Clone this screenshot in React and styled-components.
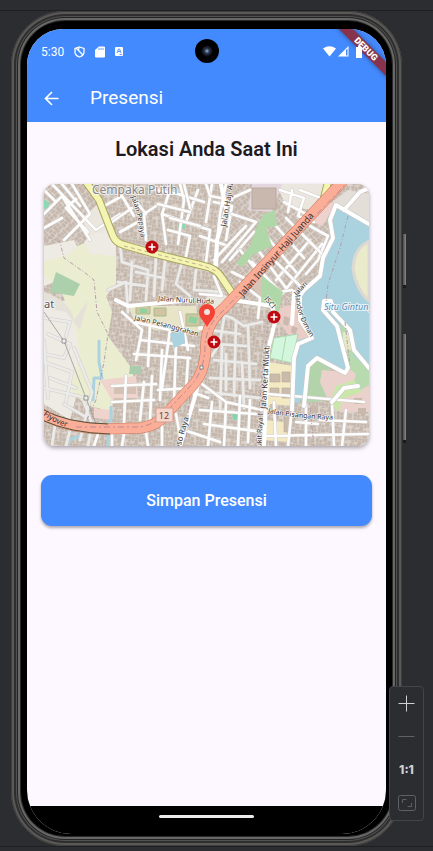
import React from "react";
import styled, { createGlobalStyle } from "styled-components";

const GlobalStyle = createGlobalStyle`
  *, *::before, *::after { box-sizing: border-box; }
  body { margin: 0; background: #2b2d30; font-family: Roboto, "Noto Sans", sans-serif; }
  button { font: inherit; border: 0; padding: 0; background: none; color: inherit; cursor: pointer; }
`;

const Stage = styled.main`
  position: relative;
  display: flex;
  flex-direction: column;
  min-height: 100vh;
  background: #2b2d30;
`;

const Strip = styled.div`
  height: ${(p) => p.$height}px;
  border-${(p) => p.$edge}: 1px solid #1e1f22;
`;

const Phone = styled.div`
  position: relative;
  display: flex;
  flex: 1;
  margin: 0 31px 0 11px;
  padding: 18px 16px 12px;
  border-radius: 54px;
  background: #000;
  box-shadow:
    inset 0 0 0 1px #3e3e3c,
    inset 0 0 0 3px #5a5957,
    inset 0 0 0 5px #2e2e2e,
    inset 0 0 0 6px #505050,
    inset 0 0 0 7px #242424,
    inset 0 0 0 9px #676765,
    inset 0 0 0 10px #2a2a2a;
`;

const SideKey = styled.span`
  position: absolute;
  right: -4px;
  top: ${(p) => p.$top}px;
  width: 3px;
  height: ${(p) => p.$length}px;
  border: solid #1b1b1b;
  border-width: 0 0 3px;
  background: linear-gradient(90deg, #4a4a48, #8b8983);
`;

const Screen = styled.div`
  position: relative;
  display: flex;
  flex: 1;
  flex-direction: column;
  overflow: hidden;
  border-radius: 36px 36px 44px 44px;
  background: #fdf7ff;
`;

const Header = styled.header`
  background: #448aff;
  color: #fff;
`;

const StatusBar = styled.div`
  display: flex;
  align-items: center;
  justify-content: space-between;
  height: 45px;
  padding: 0 22px 0 14px;
  font-size: 12px;
`;

const StatusGroup = styled.div`
  display: flex;
  align-items: center;
  gap: ${(p) => p.$gap}px;
  position: relative;
  z-index: 2;
`;

const Clock = styled.time`
  line-height: 16px;
`;

const Camera = styled.div`
  position: absolute;
  top: 10px;
  left: 50%;
  width: 24px;
  height: 24px;
  margin-left: -12px;
  border-radius: 50%;
  background: radial-gradient(circle, #7791ae 0 1px, #35425a 2px, #191e2c 4px, #000 6px);
`;

const DebugRibbon = styled.div`
  position: absolute;
  z-index: ${(p) => (p.$label ? 3 : 1)};
  top: 15px;
  right: -30px;
  width: 100px;
  height: 10px;
  background: ${(p) => (p.$label ? "none" : "#87334d")};
  box-shadow: ${(p) => (p.$label ? "none" : "0 0 5px rgba(0, 0, 0, 0.4)")};
  color: #fff;
  font-size: 9px;
  font-weight: 900;
  line-height: 10px;
  text-align: center;
  transform: rotate(45deg);
`;

const AppBar = styled.div`
  display: flex;
  align-items: center;
  gap: 28px;
  height: 48px;
  padding: 0 14px;
`;

const BackButton = styled.button`
  display: flex;
  width: 21px;
  height: 21px;
`;

const Title = styled.h1`
  margin: 0;
  font-size: 19px;
  font-weight: 400;
  line-height: 24px;
`;

const Content = styled.section`
  display: flex;
  flex: 1;
  flex-direction: column;
  padding: 14px;
`;

const Heading = styled.h2`
  margin: 0 0 21px;
  color: #1d1b20;
  font-size: 20px;
  font-weight: 600;
  line-height: 27px;
  text-align: center;
`;

const MapCard = styled.div`
  margin: 0 3px 29px;
  overflow: hidden;
  border-radius: 11px;
  box-shadow: 0 2px 4px rgba(0, 0, 0, 0.35);

  svg { display: block; width: 100%; height: auto; }
`;

const SaveButton = styled.button`
  height: 51px;
  border-radius: 11px;
  background: #448aff;
  box-shadow: 0 2px 3px rgba(0, 0, 0, 0.32);
  color: #fff;
  font-size: 16px;
  font-weight: 500;
`;

const NavBar = styled.div`
  display: flex;
  justify-content: center;
  height: 28px;
  padding-top: 9px;
  background: #000;
`;

const Handle = styled.span`
  width: 95px;
  height: 3px;
  border-radius: 2px;
  background: #ececec;
`;

const ZoomPanel = styled.div`
  position: absolute;
  right: 9px;
  bottom: 30px;
  display: flex;
  flex-direction: column;
  width: 35px;
  padding-bottom: 1px;
  border: 1px solid #43454a;
  border-radius: 4px;
  background: #2b2d30;
`;

const ZoomButton = styled.button`
  display: flex;
  align-items: center;
  justify-content: center;
  height: 33px;
  color: ${(p) => (p.$dim ? "#5f6164" : "#ced0d6")};
  font-family: Inter, sans-serif;
  font-size: 12px;
  font-weight: 800;
`;

const wide = { fill: "none", strokeLinecap: "round", strokeLinejoin: "round" };

const lanes = [
  "M44 214L62 196L90 240M56 202L44 190M52 184L96 230L120 214M62 184L80 206M72 184L90 214L64 240M44 228L62 218M76 199L66 208L88 232",
  "M106 205L122 196L134 216M112 222L132 208M120 232L138 222L146 236M134 199L146 214M146 240L144 214L156 206M170 190L162 214L166 244M162 214L186 222L198 190",
  "M156 190L178 194L204 202M180 184L184 200L178 244M184 222L210 230L206 262M168 230L190 236L186 256M214 202L232 206L226 240M200 236L228 246",
  "M184 184L190 208M212 184L206 222M170 218L200 226M158 204L190 212",
  "M120 244L122 262L148 270L146 300M132 262L130 300M156 256L154 296M166 252L162 290M182 262L176 284L190 296M118 282L146 286M108 290L126 282L128 312M136 272L164 278M196 270L194 290L222 292",
  "M206 184L210 196L232 200M226 184L220 214L214 270M232 214L256 222L222 262M246 226L214 260M254 232L230 260M232 198L250 190L270 190",
  "M280 190L304 198L298 216L314 222M284 202L306 214M292 190L288 212M300 190L326 200M310 226L328 236L318 260L306 274M276 226L304 258M268 238L296 272M258 250L286 288M298 230L270 262M310 240L276 280M322 244L282 294",
  "M252 262L280 292L292 290M240 282L260 298L258 318M232 272L248 280M214 276L222 296L200 294M240 250L258 272M286 218L322 254M272 258L300 286",
  "M214 312L232 318L244 326L262 322M224 318L220 342L212 356M236 322L234 396M216 344L246 346M214 360L256 364M210 378L260 380M206 392L260 398M222 346L220 412M248 326L250 388M210 330L240 334M226 354L226 390M242 362L244 408",
  "M202 384L226 402L262 410M200 410L256 414M204 424L262 432M212 402L208 446M226 404L224 446M240 396L238 446M250 400L248 442M184 430L220 442",
  "M268 394L364 402M274 402L276 446M292 408L288 446M306 404L306 446M320 420L366 422M332 402L334 446M262 436L368 434M346 410L342 446M296 422L318 424",
  "M44 318L70 322L66 336M48 334L70 344L64 358L44 354M44 362L72 372L66 402M50 378L76 388M44 388L86 398M74 348L92 392L80 440M44 340L48 398M56 418L52 446M70 430L66 446M84 402L92 424L88 446M64 404L84 416",
  "M122 312L142 330L136 360M134 322L170 330L162 388M150 324L148 366M140 340L194 346M134 354L190 358M144 382L140 420M126 376L124 424M112 386L156 384M112 402L154 400M152 376L150 420M162 350L160 400M176 344L174 402M188 358L186 392M158 390L190 388M180 312L188 350",
  "M98 434L94 446M112 434L112 446M124 434L122 446M146 432L148 446M162 426L162 446M176 414L180 436M192 392L208 398",
];

const greyLanes = [4, 8, 11];

const hospitals = [[152, 247], [274, 317], [214, 342]];

const roadLabels = [
  { x: 92, y: 194, size: 12, fill: "#88888d", text: "Cempaka Putih" },
  { x: 44, y: 308, size: 11, fill: "#55555c", text: "at" },
  { x: 324, y: 310, size: 9, fill: "#5d91bb", slant: "italic", text: "Situ Gintung" },
];

const curvedLabels = [
  { id: "papaya", d: "M131 197Q139 216 141 240", size: 7, text: "Jalan Pepaya" },
  { id: "haji", d: "M226 227L234 180", size: 8, text: "Jalan Haji Ab" },
  { id: "juanda", d: "M243 297L322 207", size: 9, text: "Jalan Insinyur Haji Juanda" },
  { id: "huda", d: "M158 301L218 304", size: 7, text: "Jalan Nurul Huda" },
  { id: "pesan", d: "M134 320Q172 328 202 338", size: 7, text: "Jalan Pesanggrahan" },
  { id: "mukti", d: "M266 409L270 338", size: 8, text: "Jalan Kerta Mukti" },
  { id: "bukit", d: "M261 452L263 410", size: 7, text: "Bukit Raya I" },
  { id: "pisangan", d: "M268 413Q300 419 340 420", size: 7, text: "Jalan Pisangan Raya" },
  { id: "raya", d: "M180 450Q184 434 190 414", size: 8, text: "oso Raya" },
  { id: "flyover", d: "M43 415Q56 425 76 430", size: 8, text: "Flyover" },
  { id: "isci", d: "M264 299L276 313", size: 7, text: "ISCI" },
  { id: "mandor", d: "M295 291Q296 318 314 342", size: 7, text: "Mandor Diman" },
  { id: "jalan", d: "M297 296L315 276", size: 7, text: "Jalan" },
];

function StreetMap() {
  return (
    <svg viewBox="44 184 325 262" role="img" aria-label="Peta lokasi">
      <defs>
        <pattern id="homes" width="17" height="15" patternUnits="userSpaceOnUse" patternTransform="rotate(8)">
          <rect width="17" height="15" fill="#dcd4cc" />
          <path d="M0 0h3v3h-3zM4 1h2v3h-2zM7 0h4v2h-4zM12 1h3v4h-3zM1 4h2v4h-2zM4 5h4v3h-4zM9 3h2v4h-2zM12 6h4v2h-4zM0 9h4v3h-4zM5 9h2v4h-2zM8 9h3v2h-3zM12 9h2v4h-2zM15 9h2v3h-2zM1 13h3v1h-3zM8 12h3v3h-3z" fill="#c7b9ad" stroke="#c0b1a5" strokeWidth=".4" />
        </pattern>
        <pattern id="homesTilted" width="15" height="13" patternUnits="userSpaceOnUse" patternTransform="rotate(-42)">
          <rect width="15" height="13" fill="#dcd5ce" />
          <path d="M0 0h3v4h-3zM4 0h2v3h-2zM7 0h3v4h-3zM11 0h3v3h-3zM0 6h4v3h-4zM5 5h3v4h-3zM9 6h2v3h-2zM12 5h2v4h-2zM1 10h4v2h-4zM7 10h3v3h-3zM11 10h3v2h-3z" fill="#c7b9ad" stroke="#c0b1a5" strokeWidth=".4" />
        </pattern>
        {curvedLabels.map((l) => <path key={l.id} id={l.id} d={l.d} />)}
      </defs>

      <rect x="44" y="184" width="325" height="262" fill="url(#homes)" />
      <path d="M44 184H88L118 242L100 254L44 254Z" fill="url(#homesTilted)" />
      <path d="M236 184H343L333 235L296 300L230 300L210 270Z" fill="url(#homesTilted)" />

      <path d="M44 246L74 240L84 262L60 280L44 286ZM44 300L82 302L88 350L70 420L44 404Z" fill="#eeebe4" />
      <path d="M82 218L98 204L110 218L106 240L88 236ZM208 290L234 298L218 316L204 312ZM276 184H332L312 210L286 206Z" fill="#ebe7df" />
      <path d="M70 254Q80 240 92 244L116 238L116 284L106 296L112 312L108 336L130 366L134 378L114 382L112 412L84 404L70 388L80 360L76 330L60 288L44 276L44 262Z" fill="#ebedd1" />
      <path d="M84 242Q94 228 114 234L116 256L90 254Z" fill="#eeeae4" />
      <path d="M56 272L80 284L74 296L50 292Z" fill="#acd0ac" />
      <path d="M44 200L49 202L48 210L44 208ZM179 223L186 222L185 229L178 228Z" fill="#8cd9b4" />
      <path d="M130 366L141 366L141 374L129 374Z" fill="#abccac" />
      <path d="M44 292Q70 300 74 320L88 300L80 330L66 312L44 308Z" fill="#e5e1d9" />

      <path d="M128 306H196L200 332L154 330L134 320Z" fill="#e8e4c8" />
      <path d="M136 306h14v8h-14zM154 308h12v8h-12zM186 314h14v12h-14z" fill="#d0c4a3" stroke="#aaba89" />
      <path d="M190 316l8 2-2 6-8-2zM140 308l7 1v4h-7z" fill="#8fd29f" />
      <path d="M100 380L136 376L138 398L112 400ZM94 408L110 410L112 420L94 418Z" fill="#eed4cd" />
      <path d="M114 384h22v10h-22zM114 398h20v8h-20z" fill="#cabbae" opacity=".8" />

      <path d="M252 184H282L272 212L248 210Z" fill="#e4d6de" />
      <path d="M318 198L336 204L322 226L304 218Z" fill="#efd2ce" />
      <path d="M244 278L258 272L270 292L262 298Z" fill="#d8c3b7" />
      <path d="M276 318Q278 302 296 306L312 332L300 346L288 334Z" fill="#e9cdc6" />
      <path d="M284 316l6 2-2 8-5-2zM292 326l6 2-3 7-4-3z" fill="#cbb9ae" />
      <path d="M268 362L294 366L292 406L270 404L264 420L284 422L290 442L264 440Z" fill="#f3eac4" />
      <path d="M270 374h10v8h-10zM282 372h8v10h-8zM270 388h9v8h-9zM282 388h9v10h-9zM284 408h7v24h-7z" fill="#cbbbad" stroke="#b8a999" strokeWidth=".6" />
      <path d="M232 414l10-4v10h-9zM238 398l3-1v4h-3z" fill="#85d4ad" />

      <path d="M336 207L348 213L369 224V370L352 362L348 340L350 366L345 373L317 358L309 364L305 390L299 404L295 402L293 356L298 340L312 336L300 318L299 300L308 286L319 279L323 260L333 236L329 216Z" fill="#aad3df" />
      <path d="M369 241Q354 248 353 268Q356 290 369 301Z" fill="#e9ebcb" stroke="#ddd8d2" strokeWidth="3" />
      <path d="M332 202L348 190L369 194V222L350 215Z" fill="#e3dfd8" />
      <path d="M309 363L317 358L330 366L326 388L328 400L300 404L306 386Z" fill="#b3d4ab" />
      <path d="M322 370L346 372L358 366L369 374V412L340 412L328 400L320 382Z" fill="#ebd1cb" />
      <path d="M340 324L347 328L354 356L369 369V385L350 396L356 374L346 366Z" fill="#b8daaf" />
      <path d="M343 332h7l2 18-9 1z" fill="#e5e8c5" />
      <path d="M330 402L336 386L354 380L362 392L344 398L338 412Z" fill="#c9e7aa" />
      <path d="M354 398h8v6h-8zM358 408h8v6h-8zM310 406h8v6h-8z" fill="#c8b8ac" />
      <path d="M99 341V362L102 378H94L93 400M111 407V420L102 430M66 446Q68 438 82 436M108 430V446" {...wide} stroke="#aad3df" strokeWidth="3" />

      {lanes.map((d, i) => (
        <g key={i}>
          <path d={d} {...wide} stroke="#d2cdc9" strokeWidth="3.6" />
          <path d={d} {...wide} stroke={greyLanes.includes(i) ? "#ebebea" : "#fdfdfd"} strokeWidth="2.6" />
        </g>
      ))}

      <rect x="252" y="188" width="24" height="21" fill="#c8b8ad" stroke="#b9a89e" />
      <path d="M264 214L275 210L277 226L266 228L272 246L254 254L242 267L236 263L250 246L258 224Z" fill="#b0d7a8" />
      <path d="M262 276L283 292L278 314L262 302Z" fill="#b0d7a8" />
      <path d="M274 338L298 334L292 363L270 358Z" fill="#d3f7dc" stroke="#add8b0" />
      <path d="M286 336L282 360" stroke="#add8b0" />
      <path d="M170 334L184 330L185 343L174 348Z" fill="#aad3df" />

      <path d="M221 184L226 210L217 240L216 270M232 300L272 306L276 318L268 350L264 446M294 292L292 324M180 446L194 400L202 370M200 328L212 330M192 300L128 306L116 300" {...wide} stroke="#fff" strokeWidth="4" />
      <path d="M336 205L330 220L333 238L323 258L320 276L304 290L300 296L300 320L312 338L298 344L294 358L292 410M336 205L369 224M344 210L360 192L369 188M304 406L308 366L317 358L345 373L348 368L337 326L323 310L324 301L331 301L333 312L350 330L354 350L369 368M332 402L344 388L358 386" {...wide} stroke="#cac7c5" strokeWidth="5" />
      <path d="M336 205L330 220L333 238L323 258L320 276L304 290L300 296L300 320L312 338L298 344L294 358L292 410M336 205L369 224M344 210L360 192L369 188M304 406L308 366L317 358L345 373L348 368L337 326L323 310L324 301L331 301L333 312L350 330L354 350L369 368M332 402L344 388L358 386" {...wide} stroke="#fff" strokeWidth="4" />
      <path d="M49 237L60 242L64 258L84 272L94 280L97 312L108 334L104 362L96 400L84 426M348 216L340 248L328 284L326 302M345 322L350 366M269 312L260 398L256 444M310 408L314 446M192 370L186 440" fill="none" stroke="#b79cac" strokeWidth="1" strokeDasharray="4 2 1 2" />
      <path d="M44 312L64 341L86 398L100 434" fill="none" stroke="#8c8c88" strokeWidth=".7" />
      <path d="M62 339h4v4h-4zM84 396h4v4h-4z" fill="#eee" stroke="#777" strokeWidth=".7" />

      <path d="M86 182L99 200L113 236Q116 243 124 245L152 253L204 266Q216 268 222 278L234 296M328 182L324 198" {...wide} stroke="#aaa65e" strokeWidth="8" />
      <path d="M86 182L99 200L113 236Q116 243 124 245L152 253L204 266Q216 268 222 278L234 296M328 182L324 198" {...wide} stroke="#f5f5b3" strokeWidth="6" />
      <path d="M124 246L204 266L218 272" fill="none" stroke="#c3ad8c" strokeDasharray="4 3" />

      <path d="M42 414Q66 428 104 429L140 428Q158 426 168 412L194 384Q206 370 206 342Q207 322 224 308L342 182" {...wide} stroke="#cf775d" strokeWidth="11" />
      <path d="M42 414Q66 428 104 429L140 428Q158 426 168 412L194 384Q206 370 206 342Q207 322 224 308L342 182" {...wide} stroke="#faad97" strokeWidth="10" />
      <path d="M42 409Q66 423 108 424M42 420Q70 433 110 434" fill="none" stroke="#55513c" />
      <path d="M76 427L140 427Q158 424 170 408L194 382Q205 366 205 346Q206 326 222 312L346 184" fill="none" stroke="#be8990" strokeDasharray="6 3 2 3" />

      {hospitals.map(([x, y]) => (
        <g key={x}>
          <circle cx={x} cy={y} r="6.500" fill="#bf0a12" />
          <path d={`M${x - 3.5} ${y}h7M${x} ${y - 3.5}v7`} stroke="#fff" strokeWidth="1.600" />
        </g>
      ))}
      <rect x="156" y="408" width="17" height="14" rx="1" fill="#f6d5ca" stroke="#d69c8b" />
      <text x="164" y="419" textAnchor="middle" fontFamily="Noto Sans, sans-serif" fontSize="9" fill="#6d4338">12</text>
      <rect x="200" y="366" width="3" height="3" fill="#fff" stroke="#666" strokeWidth=".7" />

      <g fontFamily="Noto Sans, sans-serif" paintOrder="stroke" strokeLinejoin="round">
        {roadLabels.map((l) => (
          <text key={l.text} x={l.x} y={l.y} fontSize={l.size} fill={l.fill} fontStyle={l.slant} stroke="#fff" strokeOpacity=".7" strokeWidth="2">{l.text}</text>
        ))}
        {curvedLabels.map((l) => (
          <text key={l.id} fontSize={l.size} fill="#35302e" stroke={l.id === "juanda" || l.id === "flyover" ? "#faad97" : "#fff"} strokeOpacity=".7" strokeWidth="1.5">
            <textPath href={`#${l.id}`}>{l.text}</textPath>
          </text>
        ))}
      </g>

      <path d="M207 327C204 321 199 318 199 312A8 8 0 0 1 215 312C215 318 210 321 207 327Z" fill="#f44336" />
      <circle cx="207" cy="312" r="3" fill="#eee4df" />
    </svg>
  );
}

export default function App() {
  return (
    <>
      <GlobalStyle />
      <Stage>
        <Strip $height={11} $edge="bottom" />
        <Phone>
          <SideKey $top={223} $length={54} />
          <SideKey $top={323} $length={109} />
          <Screen>
            <Header>
              <StatusBar>
                <StatusGroup $gap={10}>
                  <Clock>5:30</Clock>
                  <svg width="11" height="12" viewBox="0 0 11 12" fill="none" stroke="#fff" strokeWidth="1.3">
                    <path d="M5.5 1L10 2.5V6Q10 9.500 5.500 11Q1 9.500 1 6V2.500Z" />
                    <path d="M2 2L9 9M5 1.500L4.500 4.500" />
                  </svg>
                  <svg width="10" height="12" viewBox="0 0 10 12">
                    <path d="M4 .5H9Q10 .5 10 1.500V10.500Q10 11.500 9 11.500H1Q0 11.500 0 10.500V4Z" fill="#fff" />
                    <path d="M4 2v2M6 2v2M8 2v2" stroke="#448aff" strokeWidth=".8" />
                  </svg>
                  <svg width="8" height="9" viewBox="0 0 8 9">
                    <rect width="8" height="9" rx="1" fill="#fff" />
                    <path d="M2 6L3.500 2H4.500L6 6M3 4.500H5M4.500 7.500H7" fill="none" stroke="#448aff" strokeWidth=".9" />
                  </svg>
                </StatusGroup>
                <StatusGroup $gap={2}>
                  <svg width="13" height="11" viewBox="0 0 13 11"><path d="M0 2.500Q6.500 -2 13 2.500L6.500 10.500Z" fill="#fff" /></svg>
                  <svg width="11" height="11" viewBox="0 0 11 11">
                    <path d="M0 10.500L10.500 0V10.500Z" fill="#fff" />
                    <path d="M8 4L9.500 2.500V9.500H8Z" fill="#448aff" />
                  </svg>
                  <svg width="13" height="12" viewBox="0 0 13 12"><path d="M6 1H7V0H10V1H11V12H5V1Z" fill="#fff" /></svg>
                </StatusGroup>
              </StatusBar>
              <Camera />
              <DebugRibbon />
              <DebugRibbon $label>DEBUG</DebugRibbon>
              <AppBar>
                <BackButton aria-label="Kembali">
                  <svg width="21" height="21" viewBox="0 0 21 21" fill="none" stroke="#fff" strokeWidth="1.700">
                    <path d="M17.500 10.500H4.500M11 4L4.500 10.500L11 17" />
                  </svg>
                </BackButton>
                <Title>Presensi</Title>
              </AppBar>
            </Header>
            <Content>
              <Heading>Lokasi Anda Saat Ini</Heading>
              <MapCard><StreetMap /></MapCard>
              <SaveButton type="button">Simpan Presensi</SaveButton>
            </Content>
            <NavBar><Handle /></NavBar>
          </Screen>
        </Phone>
        <Strip $height={5} $edge="top" />
        <ZoomPanel>
          <ZoomButton aria-label="Perbesar">
            <svg width="17" height="17" viewBox="0 0 17 17" stroke="currentColor"><path d="M.5 8.500H16.500M8.500 .5V16.500" /></svg>
          </ZoomButton>
          <ZoomButton $dim aria-label="Perkecil">
            <svg width="17" height="17" viewBox="0 0 17 17" stroke="currentColor"><path d="M.5 8.500H16.500" /></svg>
          </ZoomButton>
          <ZoomButton>1:1</ZoomButton>
          <ZoomButton $dim aria-label="Sesuaikan layar">
            <svg width="18" height="16" viewBox="0 0 18 16" fill="none" stroke="currentColor">
              <rect x=".5" y=".5" width="17" height="15" rx="2" />
              <path d="M4.500 8V4.500H8.500M9.500 11.500H13.500V8" />
            </svg>
          </ZoomButton>
        </ZoomPanel>
      </Stage>
    </>
  );
}
